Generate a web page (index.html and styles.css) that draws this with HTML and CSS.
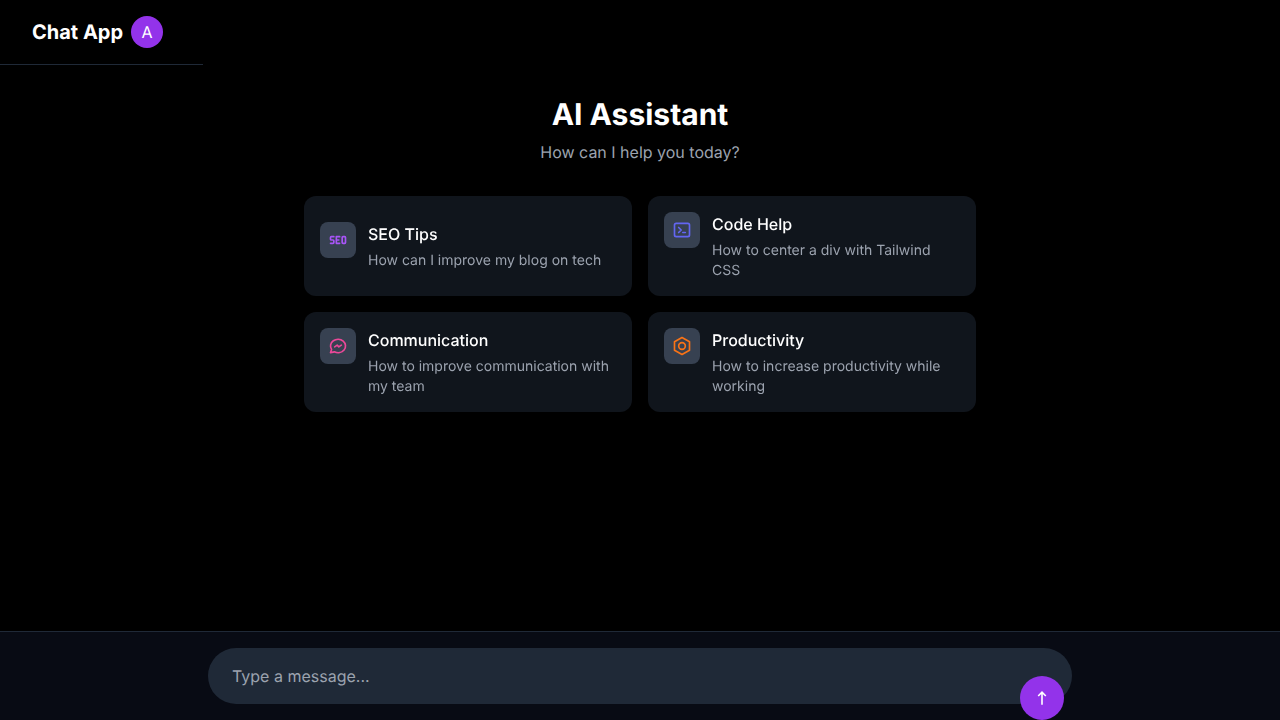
FILE: index.html
```html
<!DOCTYPE html>
<html lang="en">
<head>
<meta charset="utf-8">
<meta name="viewport" content="width=device-width, initial-scale=1">
<title>Chat App</title>
<link rel="stylesheet" href="styles.css">
</head>
<body>
<div class="app">
  <header class="header">
    <span class="brand">Chat App</span>
    <span class="avatar">A</span>
  </header>
  <main class="main">
    <h1 class="title">AI Assistant</h1>
    <p class="subtitle">How can I help you today?</p>
    <div class="cards">
      <button class="card" type="button">
        <span class="card-body">
          <span class="tile purple">
            <svg class="icon" viewBox="0 0 24 24" fill="none" stroke="currentColor" stroke-width="2" stroke-linecap="round" stroke-linejoin="round" aria-hidden="true"><path d="M7 8H4a1 1 0 0 0-1 1v2a1 1 0 0 0 1 1h2a1 1 0 0 1 1 1v2a1 1 0 0 1-1 1H3M14 16h-4V8h4M11 12h2M18 8h2a1 1 0 0 1 1 1v6a1 1 0 0 1-1 1h-2a1 1 0 0 1-1-1V9a1 1 0 0 1 1-1z"/></svg>
          </span>
          <span class="card-text">
            <span class="card-title">SEO Tips</span>
            <span class="card-desc">How can I improve my blog on tech</span>
          </span>
        </span>
      </button>
      <button class="card" type="button">
        <span class="card-body">
          <span class="tile indigo">
            <svg class="icon" viewBox="0 0 24 24" fill="none" stroke="currentColor" stroke-width="2" stroke-linecap="round" stroke-linejoin="round" aria-hidden="true"><rect x="3" y="4" width="18" height="16" rx="2"/><path d="M8 9l3 3-3 3M13 15h3"/></svg>
          </span>
          <span class="card-text">
            <span class="card-title">Code Help</span>
            <span class="card-desc">How to center a div with Tailwind CSS</span>
          </span>
        </span>
      </button>
      <button class="card" type="button">
        <span class="card-body">
          <span class="tile pink">
            <svg class="icon" viewBox="0 0 24 24" fill="none" stroke="currentColor" stroke-width="2" stroke-linecap="round" stroke-linejoin="round" aria-hidden="true"><path d="M3 20l1.300-3.900C1.976 12.663 2.874 8.228 6.400 5.726c3.526-2.501 8.590-2.296 11.845.480 3.255 2.777 3.695 7.266 1.029 10.501C16.608 19.942 11.659 20.922 7.700 19z"/><path d="M8 13l3-2 2 2 3-2"/></svg>
          </span>
          <span class="card-text">
            <span class="card-title">Communication</span>
            <span class="card-desc">How to improve communication with my team</span>
          </span>
        </span>
      </button>
      <button class="card" type="button">
        <span class="card-body">
          <span class="tile orange">
            <svg class="icon" viewBox="0 0 24 24" fill="none" stroke="currentColor" stroke-width="2" stroke-linejoin="round" aria-hidden="true"><path d="M12 1.8l9 5.1v10.2l-9 5.1-9-5.1V6.900z"/><circle cx="12" cy="12" r="4"/></svg>
          </span>
          <span class="card-text">
            <span class="card-title">Productivity</span>
            <span class="card-desc">How to increase productivity while working</span>
          </span>
        </span>
      </button>
    </div>
  </main>
  <footer class="footer">
    <form class="composer">
      <input class="message" type="text" placeholder="Type a message..." aria-label="Message">
      <button class="send" type="button" aria-label="Send message">
        <svg class="icon" viewBox="0 0 20 20" fill="none" stroke="currentColor" stroke-width="1.6" stroke-linejoin="miter" aria-hidden="true"><path d="M10 16.800V4.200M6.200 8L10 4.200 13.800 8"/></svg>
      </button>
    </form>
  </footer>
</div>
</body>
</html>
```
FILE: styles.css
```css
* {
  box-sizing: border-box;
}

body {
  margin: 0;
  background: #000;
  color: #fff;
  font-family: Inter, "Liberation Sans", sans-serif;
  font-size: 16px;
  line-height: 24px;
  text-rendering: geometricPrecision;
}

button,
input {
  font: inherit;
  color: inherit;
  border: 0;
  text-rendering: inherit;
}

button {
  cursor: pointer;
}

.app {
  display: flex;
  flex-direction: column;
  min-height: 100vh;
}

.header {
  display: flex;
  align-items: center;
  align-self: flex-start;
  gap: 8px;
  padding: 16px 40px 16px 32px;
  border-bottom: 1px solid #1f2937;
}

.brand {
  font-size: 20px;
  font-weight: 700;
  line-height: 28px;
}

.avatar {
  display: grid;
  place-items: center;
  width: 32px;
  height: 32px;
  border-radius: 50%;
  background: #9333ea;
}

.main {
  flex: 1;
  width: 100%;
  max-width: 704px;
  margin: 0 auto;
  padding: 31px 16px;
}

.title {
  margin: 0 0 6px;
  font-size: 30px;
  font-weight: 700;
  line-height: 38px;
  text-align: center;
}

.subtitle {
  margin: 0 0 32px;
  color: #9ca3af;
  text-align: center;
}

.cards {
  display: grid;
  grid-template-columns: repeat(auto-fit, minmax(280px, 1fr));
  gap: 16px;
}

.card {
  display: flex;
  align-items: center;
  padding: 16px 16px 15px;
  border-radius: 12px;
  background: #10151c;
  text-align: left;
  will-change: transform;
}

.card-body {
  display: flex;
  align-items: flex-start;
  gap: 12px;
}

.tile {
  flex: none;
  display: grid;
  padding: 8px;
  border-radius: 8px;
  background: #374151;
}

.icon {
  display: block;
  width: 20px;
  height: 20px;
}

.purple { color: #a855f7; }
.indigo { color: #6366f1; }
.pink { color: #ec4899; }
.orange { color: #f97316; }

.card-title,
.card-desc {
  display: block;
}

.card-title {
  margin-bottom: 5px;
  font-weight: 500;
}

.card-desc {
  color: #9ca3af;
  font-size: 14px;
  line-height: 20px;
}

.footer {
  padding: 16px;
  border-top: 1px solid #1f2937;
  background: #080b14;
}

.composer {
  position: relative;
  max-width: 864px;
  margin: 0 auto;
}

.message {
  display: block;
  width: 100%;
  padding: 16px 64px 16px 24px;
  border-radius: 28px;
  background: #1f2937;
  outline: none;
}

.message::placeholder {
  color: #9ca3af;
}

.send {
  position: absolute;
  top: 50%;
  right: 8px;
  padding: 12px;
  border-radius: 50%;
  background: #9333ea;
}
```
